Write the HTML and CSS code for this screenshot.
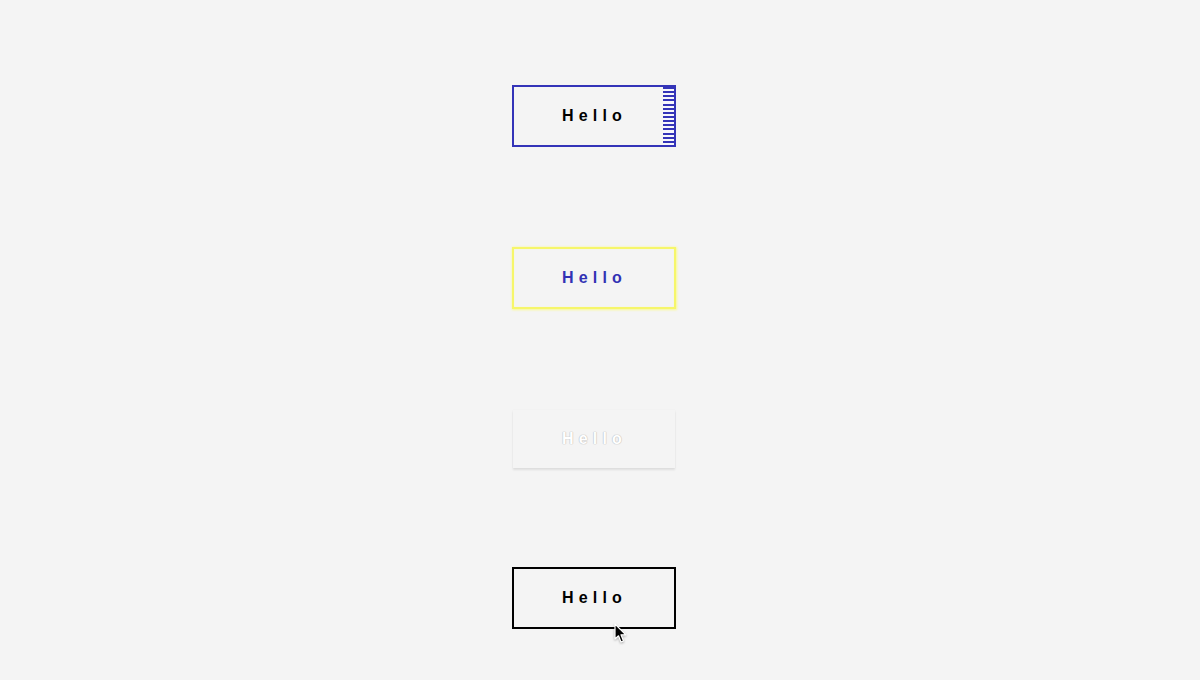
FILE: index.html
```html
<!DOCTYPE html>
<html>
<head>
<meta charset="utf-8">
<link rel="stylesheet" href="styles.css">
</head>
<body>
<main class="stack">
  <div class="slot"><button class="btn btn-striped">Hello</button></div>
  <div class="slot"><button class="btn btn-focus">Hello</button></div>
  <div class="slot slot-short"><button class="btn btn-disabled">Hello</button></div>
  <div class="slot"><button class="btn btn-plain">Hello</button>
    <svg class="cursor" width="14" height="22" viewBox="0 0 14 22"><path d="M1 1 L1 16 L4.5 12.8 L7 19 L9.5 18 L7 11.8 L11.8 11.8 Z" fill="#000" stroke="#fff" stroke-width="1.2" stroke-linejoin="round"/></svg>
  </div>
</main>
</body>
</html>
```
FILE: styles.css
```css
html, body {
  margin: 0;
  padding: 0;
  background: #f4f4f4;
  width: 1200px;
  height: 680px;
  overflow: hidden;
}
.stack {
  display: flex;
  flex-direction: column;
  align-items: center;
  gap: 100px;
  padding-top: 85px;
  padding-right: 12px;
}
.slot {
  position: relative;
  width: 164px;
  height: 62px;
  display: flex;
  align-items: flex-start;
  justify-content: center;
}
.slot-short {
  height: 58px;
}
.btn {
  box-sizing: border-box;
  width: 164px;
  height: 62px;
  margin: 0;
  padding: 0 0 0 1px;
  background: #f4f4f4;
  border: 2px solid #000;
  font-family: "Liberation Sans", Arial, sans-serif;
  font-weight: bold;
  font-size: 16px;
  letter-spacing: 5.2px;
  color: #000;
  position: relative;
}
.btn-striped {
  border-color: #3434b8;
  background-image: repeating-linear-gradient(to bottom, #3434b8 0 2px, #f6f6fc 2px 4.15px);
  background-size: 11px 100%;
  background-position: right top;
  background-repeat: no-repeat;
}
.btn-focus {
  border-color: #f6f66a;
  box-shadow: 0 0 2px 0.5px #fafa90, inset 0 0 1px #fafa90;
  color: #3232b4;
}
.btn-disabled {
  width: 162px;
  height: 58px;
  border: none;
  margin-top: 1px;
  color: #ffffff;
  text-shadow: 0 0 1px #bcbcbc, 0 0 1px #c4c4c4, 0 0 1px #cccccc;
  box-shadow: 0 2px 2px rgba(0,0,0,0.09), 0 0 1px rgba(0,0,0,0.05);
}
.btn-plain {
  border-color: #000;
}
.cursor {
  position: absolute;
  left: 102px;
  top: 56px;
  filter: drop-shadow(0 1px 1px rgba(0,0,0,0.3));
}
```
